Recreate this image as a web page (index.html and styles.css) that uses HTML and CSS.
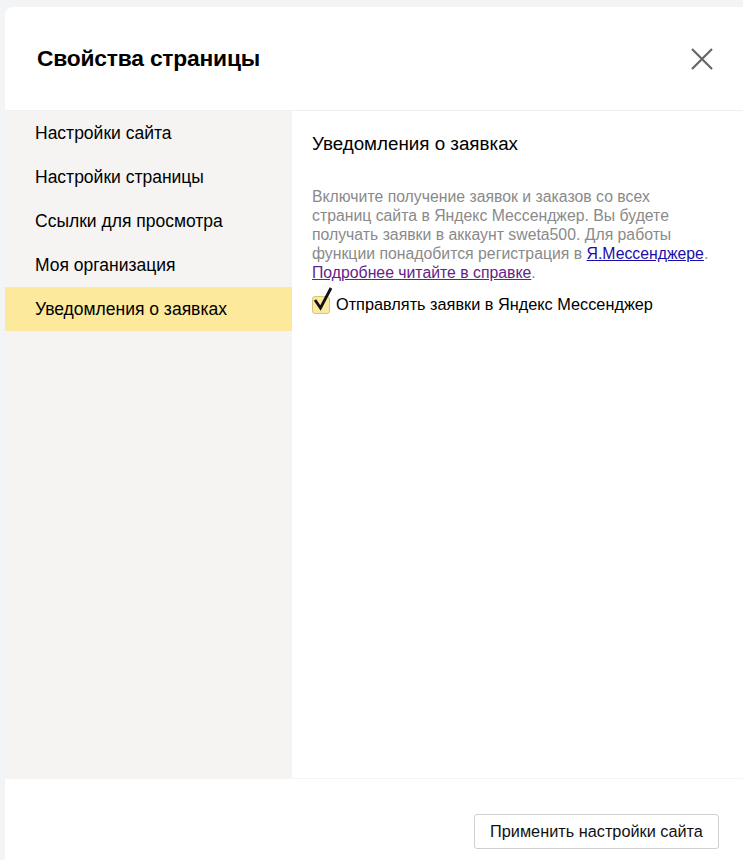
FILE: index.html
```html
<!DOCTYPE html>
<html lang="ru">

<head>
    <meta charset="utf-8">
    <meta name="viewport" content="width=device-width, initial-scale=1.0">
    <title>Свойства страницы</title>
    <link rel="stylesheet" href="styles.css">
</head>

<body>
    <div class="modal">
        <header class="modal-head">
            <h1>Свойства страницы</h1>
            <button class="close" aria-label="Закрыть">
                <svg width="24" height="24" viewBox="0 0 24 24">
                    <path d="M2 2 L22 22 M22 2 L2 22" stroke="#666" stroke-width="2.2" fill="none"/>
                </svg>
            </button>
        </header>

        <div class="modal-body">
            <nav class="side">
                <a class="side-item">Настройки сайта</a>
                <a class="side-item">Настройки страницы</a>
                <a class="side-item">Ссылки для просмотра</a>
                <a class="side-item">Моя организация</a>
                <a class="side-item active">Уведомления о заявках</a>
            </nav>

            <section class="content">
                <h2>Уведомления о заявках</h2>
                <p class="hint">
                    Включите получение заявок и заказов со всех страниц сайта в Яндекс Мессенджер. Вы будете получать заявки в аккаунт sweta500. Для работы функции понадобится регистрация в <a href="#" class="link">Я.Мессенджере</a>.
                    <a href="#" class="link visited">Подробнее читайте в справке</a>.
                </p>
                <label class="check">
                    <span class="box">
                        <svg width="22" height="26" viewBox="0 0 22 26">
                            <path d="M2 14 L7.5 22 L18 2" stroke="#111" stroke-width="2.8" fill="none"/>
                        </svg>
                    </span>
                    Отправлять заявки в Яндекс Мессенджер
                </label>
            </section>
        </div>

        <footer class="modal-foot">
            <button class="apply">Применить настройки сайта</button>
        </footer>
    </div>
</body>

</html>
```

FILE: styles.css
```css
* {
    margin: 0;
    box-sizing: border-box;
}

body {
    background: #f3f4f6;
    font-family: 'Liberation Sans', Arial, sans-serif;
    color: #000;
    padding: 7px 0 0 5px;
    height: 860px;
    overflow: hidden;
}

.modal {
    background: #fff;
    border-radius: 8px 0 0 0;
    height: 853px;
    display: flex;
    flex-direction: column;
}

.modal-head {
    height: 104px;
    display: flex;
    align-items: center;
    justify-content: space-between;
    padding: 0 29px 0 32px;
    border-bottom: 1px solid #f0f0f0;
}

.modal-head h1 {
    font-size: 22.8px;
    font-weight: bold;
    letter-spacing: -0.2px;
}

.close {
    background: none;
    border: 0;
    padding: 0;
    width: 24px;
    height: 24px;
    margin-top: 1px;
}

.modal-body {
    display: flex;
    height: 668px;
    border-bottom: 1px solid #f5f5f5;
}

.side {
    width: 287px;
    background: #f5f4f2;
}

.side-item {
    display: block;
    height: 44px;
    line-height: 44px;
    padding-left: 30px;
    font-size: 17.5px;
    color: #000;
}

.side-item.active {
    background: #fde99b;
}

.content {
    flex: 1;
    padding: 22px 20px 0 20px;
}

.content h2 {
    font-size: 18.8px;
    font-weight: normal;
    line-height: 22px;
    margin-bottom: 32px;
}

.hint {
    font-size: 15.8px;
    line-height: 19px;
    color: #8a8a8a;
    width: 400px;
}

.link {
    color: #1a0dab;
    text-decoration: underline;
}

.link.visited {
    color: #66218a;
}

.check {
    display: flex;
    align-items: center;
    gap: 6px;
    font-size: 16.3px;
    margin-top: 13px;
}

.box {
    position: relative;
    width: 18px;
    height: 18px;
    background: #fce9a0;
    border: 1px solid #d9c47a;
    border-radius: 3px;
}

.box svg {
    position: absolute;
    left: 0;
    top: -11px;
}

.modal-foot {
    flex: 1;
    display: flex;
    justify-content: flex-end;
    align-items: flex-start;
    padding: 35px 24px 0 0;
}

.apply {
    width: 245px;
    height: 35px;
    background: #fff;
    border: 1px solid #d0d0d0;
    border-radius: 3px;
    font-family: 'Liberation Sans', Arial, sans-serif;
    font-size: 16.3px;
    color: #111;
}
```
